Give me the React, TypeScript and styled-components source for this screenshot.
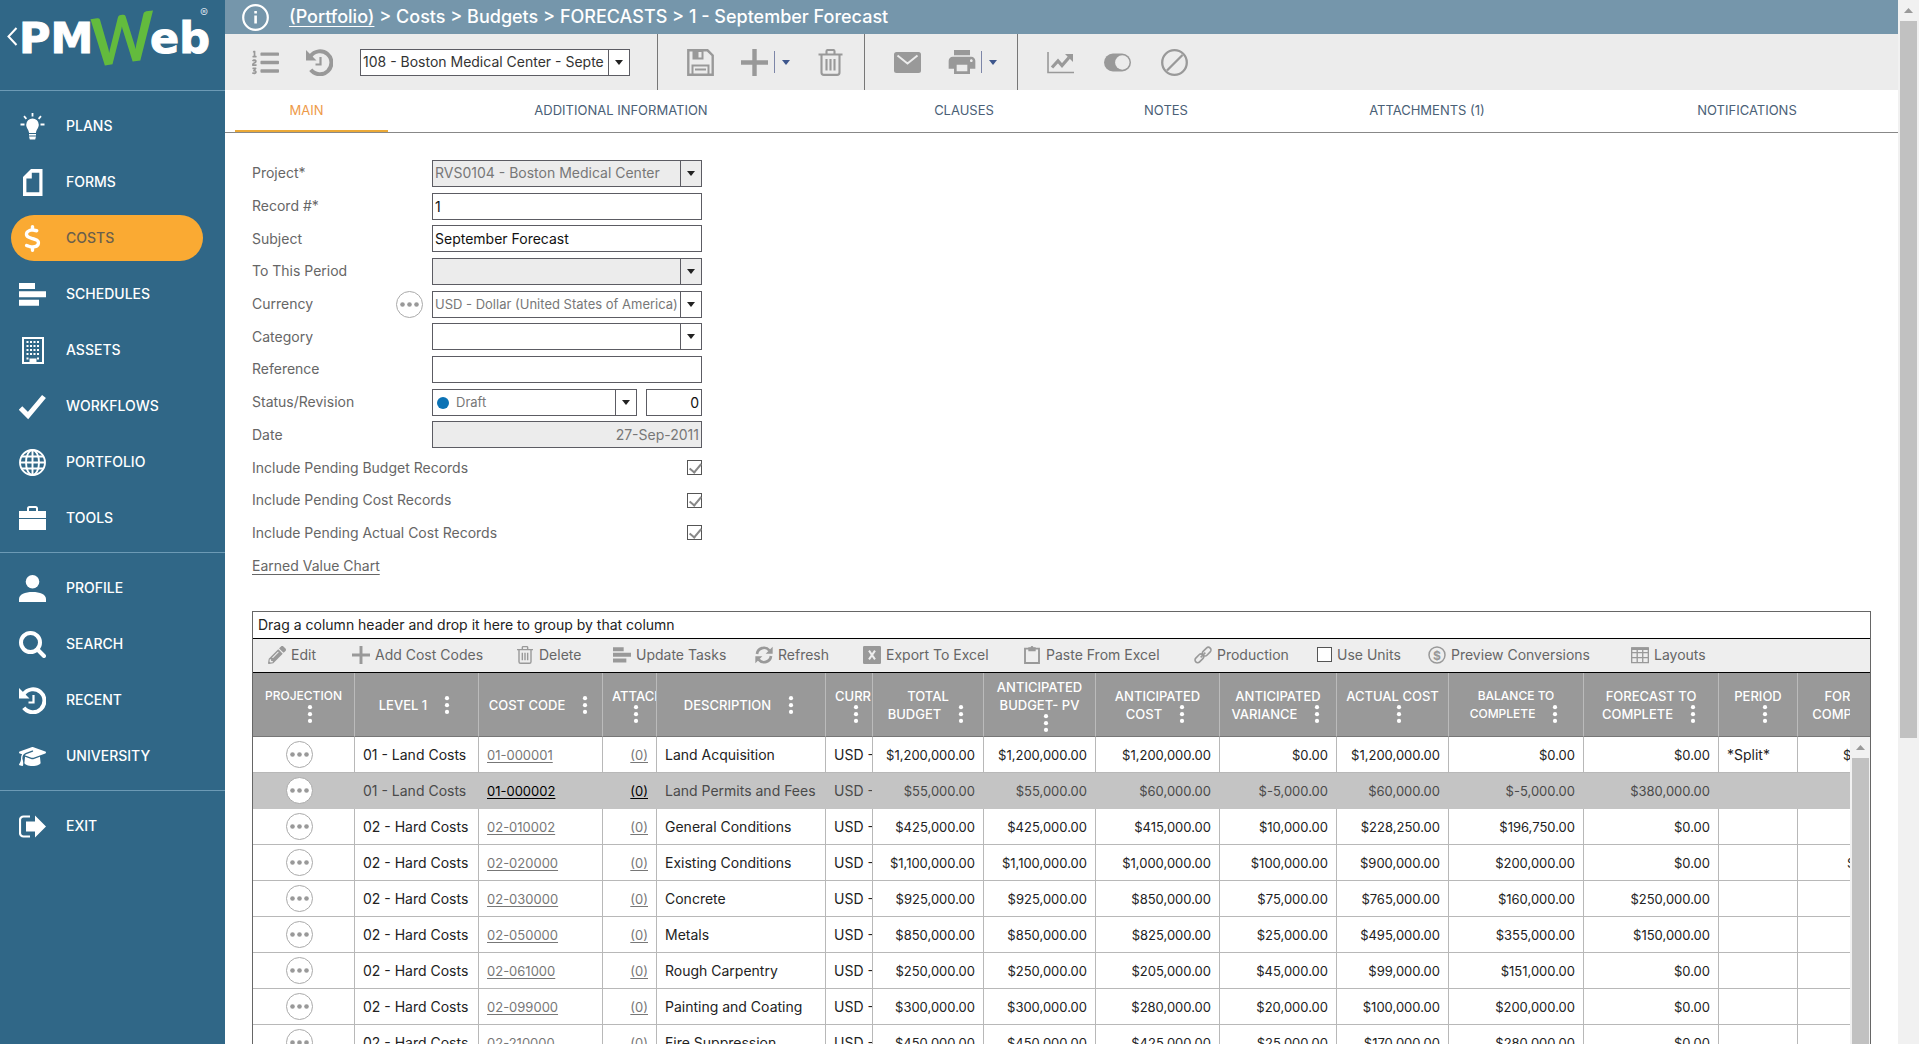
import React from "react";
import styled, { createGlobalStyle } from "styled-components";
import { FaDollarSign, FaGraduationCap } from "react-icons/fa6";
import { FaListOl, FaPencilAlt } from "react-icons/fa";
import { MdPrint } from "react-icons/md";

const GlobalStyle = createGlobalStyle`
  * { box-sizing: border-box; }
  body {
    margin: 0;
    background: #fff;
    overflow: hidden;
    font-family: Inter, "Open Sans", sans-serif;
    font-size: 14px;
    line-height: 18px;
    color: #222;
  }
  button, input, select { font: inherit; color: inherit; margin: 0; }
  button { border: 0; background: none; padding: 0; cursor: pointer; }
  svg { display: block; flex: none; }
`;

const Page = styled.div`
  display: grid;
  grid-template-columns: 225px minmax(0, 1fr) 21px;
  height: 100vh;
  overflow: hidden;
`;

/* ---------- side bar ---------- */

const Sidebar = styled.aside`
  background: #306787;
  color: #fff;
  overflow: hidden;
`;

const Brand = styled.a`
  display: block;
  height: 91px;
  border-bottom: 1px solid #6c9ab5;
  color: #fff;
`;

const NavGroup = styled.nav`
  display: flex;
  flex-direction: column;
  gap: 10px;
  padding: 12px 11px 11px;
  border-bottom: 1px solid #6c9ab5;
  &:last-child { border-bottom: 0; }
`;

const NavItem = styled.a<{ $active?: boolean }>`
  display: flex;
  align-items: center;
  gap: 20px;
  width: 192px;
  height: 46px;
  padding: 0 8px;
  border-radius: 23px;
  font-weight: 500;
  text-decoration: none;
  color: ${(p) => (p.$active ? "#6b5f4b" : "#fff")};
  background: ${(p) => (p.$active ? "#faaa33" : "transparent")};
  svg { color: #fff; }
`;

/* ---------- header, tool bar, tabs ---------- */

const Main = styled.main`
  display: flex;
  flex-direction: column;
  min-width: 0;
  overflow: hidden;
  & > * { flex: none; }
`;

const TitleBar = styled.header`
  display: flex;
  align-items: center;
  gap: 20px;
  height: 34px;
  padding-left: 17px;
  background: #7596ab;
  color: #fff;
  font-size: 18px;
  font-weight: 500;
  line-height: 24px;
  a { color: inherit; text-underline-offset: 3px; }
`;

const Toolbar = styled.div`
  display: flex;
  height: 56px;
  background: #ececec;
  color: #999;
`;

const ToolGroup = styled.div`
  display: flex;
  align-items: center;
  gap: 27px;
  padding: 0 20px 0 29px;
  border-right: 1px solid #777;
  &:first-child { padding: 0 27px; }
  &:last-child { border-right: 0; gap: 30px; }
`;

const IconButton = styled.button`
  display: flex;
  align-items: center;
  justify-content: center;
  width: 27px;
  height: 27px;
`;

const Split = styled.div`
  display: flex;
  align-items: center;
  gap: 6px;
`;

const SplitArrow = styled.button`
  display: flex;
  align-items: center;
  height: 22px;
  padding-left: 7px;
  border-left: 1px solid #7d86a8;
  color: #3d568c;
`;

const Tabs = styled.div`
  display: grid;
  grid-template-columns: 163fr 466fr 220fr 184fr 338fr 302fr;
  height: 43px;
  border-bottom: 1px solid #888;
`;

const Tab = styled.button<{ $active?: boolean }>`
  position: relative;
  padding-bottom: 2px;
  font-size: 13px;
  color: ${(p) => (p.$active ? "#ee9a48" : "#4a6076")};
  &::after {
    content: "";
    display: ${(p) => (p.$active ? "block" : "none")};
    position: absolute;
    left: 10px;
    right: 0;
    bottom: 0;
    height: 2px;
    background: #eba937;
  }
`;

/* ---------- form ---------- */

const Form = styled.form`
  display: grid;
  grid-template-columns: 144px 36px 270px;
  grid-auto-rows: 1fr;
  align-items: center;
  height: 425px;
  margin: 24px 0 29px;
  padding-left: 27px;
  color: #666;
`;

const Label = styled.label<{ $wide?: boolean }>`
  grid-column: 1 / span ${(p) => (p.$wide ? 2 : 1)};
  white-space: nowrap;
`;

const FieldCell = styled.div`
  grid-column: 3;
  display: flex;
  gap: 9px;
`;

const TextInput = styled.input<{ $right?: boolean; $muted?: boolean }>`
  flex: 1;
  width: 0;
  min-width: 0;
  height: 27px;
  padding: 0 2px;
  border: 1px solid #5c5c63;
  border-radius: 0;
  outline: 0;
  background: ${(p) => (p.$muted ? "#ececec" : "#fff")};
  color: ${(p) => (p.$muted ? "#777" : "#111")};
  text-align: ${(p) => (p.$right ? "right" : "left")};
`;

const SelectBox = styled.span<{ $width?: number; $muted?: boolean }>`
  position: relative;
  display: flex;
  width: ${(p) => p.$width ?? 270}px;
  height: 27px;
  border: 1px solid #5c5c63;
  background: ${(p) => (p.$muted ? "#ececec" : "#fff")};
  color: #333;
`;

const Select = styled.select<{ $small?: boolean; $inset?: number; $tone?: string }>`
  flex: 1;
  min-width: 0;
  padding: 0 0 0 ${(p) => p.$inset ?? 2}px;
  margin-right: 21px;
  border: 0;
  border-radius: 0;
  outline: 0;
  appearance: none;
  background: transparent;
  font-size: ${(p) => (p.$small ? 13 : 14)}px;
  color: ${(p) => p.$tone ?? "#777"};
`;

const SelectArrow = styled.span`
  position: absolute;
  top: 0;
  right: 0;
  bottom: 0;
  display: flex;
  align-items: center;
  justify-content: center;
  width: 21px;
  border-left: 1px solid #5c5c63;
  color: #222;
  pointer-events: none;
`;

const StatusDot = styled.span`
  position: absolute;
  top: 7px;
  left: 4px;
  width: 12px;
  height: 12px;
  border-radius: 50%;
  background: #0b72b5;
  pointer-events: none;
`;

const RoundButton = styled.button`
  display: flex;
  align-items: center;
  justify-content: center;
  width: 27px;
  height: 27px;
  border: 1px solid #aaa;
  border-radius: 50%;
  background: #fff;
  color: #999;
`;

const CheckBox = styled.input`
  appearance: none;
  position: relative;
  width: 15px;
  height: 15px;
  border: 1px solid #555;
  background: #fff;
  &:checked::after {
    content: "";
    position: absolute;
    top: 0;
    left: 4px;
    width: 5px;
    height: 10px;
    border: solid #888;
    border-width: 0 2px 2px 0;
    transform: rotate(40deg);
  }
`;

const CheckCell = styled.div`
  grid-column: 3;
  justify-self: end;
  display: flex;
`;

const ChartLink = styled.a`
  grid-column: 1 / -1;
  color: #666;
  text-underline-offset: 3px;
`;

/* ---------- grid ---------- */

const Grid = styled.section`
  margin: 0 27px;
  border: 1px solid #666;
`;

const GroupHint = styled.div`
  padding: 4px 5px;
  border-bottom: 1px solid #000;
`;

const GridTools = styled.div`
  display: grid;
  grid-template-columns: 84px 164px 97px 142px 108px 160px 171px 123px 111px 203px auto;
  align-items: center;
  height: 34px;
  padding: 0 0 2px 15px;
  border-bottom: 1px solid #000;
  background: #eee;
  color: #666;
`;

const ToolButton = styled.button`
  display: flex;
  align-items: center;
  gap: 5px;
  white-space: nowrap;
  svg { color: #999; }
`;

const ToolCheck = styled.label`
  display: flex;
  align-items: center;
  gap: 5px;
  white-space: nowrap;
`;

const GridBody = styled.div`
  display: grid;
  grid-template-columns: minmax(0, 1fr) 20px;
`;

const TableClip = styled.div`
  overflow: hidden;
`;

const Table = styled.table`
  table-layout: fixed;
  width: 1688px;
  border-spacing: 0;
`;

const Th = styled.th<{ $small?: boolean }>`
  height: 64px;
  padding: 0 9px;
  border-right: 1px solid #bbb;
  border-bottom: 1px solid #777;
  overflow: hidden;
  background: #999;
  color: #fff;
  font-size: ${(p) => (p.$small ? 12 : 13)}px;
  font-weight: 500;
  white-space: nowrap;
  text-align: center;
`;

const HeadLine = styled.div`
  display: flex;
  justify-content: safe center;
  align-items: center;
  height: 18px;
`;

const MenuDots = styled.button`
  margin-left: 13px;
  color: #fff;
`;

const Row = styled.tr<{ $selected?: boolean }>`
  height: 36px;
  background: ${(p) => (p.$selected ? "#c4c4c4" : "#fff")};
  color: ${(p) => (p.$selected ? "#4a4a4a" : "#222")};
  td { border-color: ${(p) => (p.$selected ? "#c4c4c4" : "#b8b8b8")}; }
  a { color: ${(p) => (p.$selected ? "#000" : "#777")}; }
`;

const Td = styled.td<{ $num?: boolean; $right?: boolean }>`
  height: 36px;
  padding: 0 8px;
  border-style: solid;
  border-width: 0 1px 1px 0;
  overflow: hidden;
  white-space: nowrap;
  font-size: ${(p) => (p.$num ? 13 : 14)}px;
  text-align: ${(p) => (p.$right ? "right" : "left")};
  a { text-underline-offset: 2px; }
`;

const ProjectionTd = styled(Td)`
  padding: 0 0 0 33px;
`;

const ScrollHead = styled.div`
  height: 64px;
  background: #999;
  border-bottom: 1px solid #777;
`;

const ScrollTrack = styled.div`
  display: flex;
  flex-direction: column;
  align-items: center;
  height: 100%;
  background: #f1f1f1;
  color: #999;
`;

const ScrollUp = styled.button`
  display: flex;
  align-items: center;
  justify-content: center;
  flex: none;
  width: 17px;
  height: 21px;
`;

const ScrollThumb = styled.div<{ $length: string }>`
  width: 17px;
  height: ${(p) => p.$length};
  background: #c1c1c1;
`;

/* ---------- icons ---------- */

type IconProps = { size?: number; children: React.ReactNode };

/* Every drawn icon shares a 27 unit box. */
const Icon = ({ size = 27, children }: IconProps) => (
  <svg width={size} height={size} viewBox="0 0 27 27" fill="currentColor" aria-hidden="true">
    {children}
  </svg>
);

const line = (w: number) => ({ fill: "none", stroke: "currentColor", strokeWidth: w });

const Caret = () => (
  <svg width="8" height="5" viewBox="0 0 8 5" fill="currentColor" aria-hidden="true">
    <path d="M0 0H8L4 5Z" />
  </svg>
);

const UpArrow = () => (
  <svg width="9" height="5" viewBox="0 0 9 5" fill="currentColor" aria-hidden="true">
    <path d="M0 5H9L4.5 0Z" />
  </svg>
);

const Ellipsis = () => (
  <svg width="19" height="5" viewBox="0 0 19 5" fill="currentColor" aria-hidden="true">
    <circle cx="2.5" cy="2.5" r="2.3" />
    <circle cx="9.5" cy="2.5" r="2.3" />
    <circle cx="16.5" cy="2.5" r="2.3" />
  </svg>
);

const Dots = () => (
  <svg width="14" height="18" viewBox="0 0 14 18" fill="currentColor" aria-hidden="true">
    <circle cx="7" cy="2.2" r="2.1" />
    <circle cx="7" cy="9.2" r="2.1" />
    <circle cx="7" cy="15.9" r="2.1" />
  </svg>
);

const BulbIcon = () => (
  <Icon>
    <path d="M13.5 5.5a6.3 6.3 0 0 1 6.3 6.3c0 3.2-2.4 4.4-2.9 8.2h-6.8c-.5-3.8-2.9-5-2.9-8.2a6.3 6.3 0 0 1 6.3-6.3zM10 21h7v1.6h-7zM10 23.4h7l-.8 3h-5.4z" />
    <path d="M13.5 0v3.5M5 3.2l2.4 2.6M22 3.2l-2.4 2.6M1.5 11.5h4M21.5 11.5h4" {...line(1.8)} />
  </Icon>
);

const FormIcon = () => (
  <Icon>
    <path fillRule="evenodd" d="M12 0H23.500V27H4V8zM12.800 3.800V9.500H7.400V23.200H20.300V3.800z" />
  </Icon>
);

const BarsIcon = ({ size }: { size?: number }) => (
  <Icon size={size}>
    <path d="M0 2h16v6H0zM0 10.300h27v6H0zM0 18.700h20v6H0z" />
  </Icon>
);

const BuildingIcon = () => (
  <Icon>
    <path d="M4 1h20v25H4z" {...line(2)} />
    {[5, 9, 13, 17].map((y) => (
      <path key={y} d={`M7.5 ${y}h2M11 ${y}h2M14.5 ${y}h2M18 ${y}h2`} {...line(2)} />
    ))}
    <path d="M7.500 20.500h2v2h-2zM18 20.500h2v2h-2zM10.500 21.500h7v5h-7z" />
  </Icon>
);

const CheckIcon = () => (
  <Icon>
    <path d="M1.500 15l7.500 7.500L25 3.500" {...line(5)} />
  </Icon>
);

const GlobeIcon = () => (
  <Icon>
    <g {...line(1.9)}>
      <circle cx="13.5" cy="13.5" r="12.5" />
      <ellipse cx="13.5" cy="13.5" rx="6.5" ry="12.5" />
      <path d="M13.5 1v25M1 13.5h25M3 7.5h21M3 19.5h21" />
    </g>
  </Icon>
);

const CaseIcon = () => (
  <Icon>
    <path d="M9 6V3.500a1.500 1.500 0 0 1 1.500-1.500h6a1.500 1.500 0 0 1 1.500 1.500V6" {...line(2)} />
    <path d="M0 6h27v7H0zM0 14h27v11H0z" />
  </Icon>
);

const PersonIcon = () => (
  <Icon>
    <circle cx="13.5" cy="6.8" r="6.8" />
    <path d="M0 27v-3c0-4.500 6-7 13.500-7S27 19.500 27 24v3z" />
  </Icon>
);

const SearchIcon = () => (
  <Icon>
    <circle cx="11.5" cy="11.5" r="9.5" {...line(4)} />
    <path d="M18.500 18.500l6.500 6.500" {...line(4)} strokeLinecap="round" />
  </Icon>
);

const HistoryIcon = () => (
  <Icon>
    <path d="M4.500 7.200A11.500 11.500 0 1 1 4.800 20.800" {...line(4)} />
    <path d="M0 1v10.500h10.500z" />
    <path d="M14.500 8v7.500H9.500" {...line(2.2)} />
  </Icon>
);

const ExitIcon = () => (
  <Icon>
    <path d="M11 3.500H4.500A3.500 3.500 0 0 0 1 7v13a3.500 3.500 0 0 0 3.500 3.500H11" {...line(2.2)} />
    <path d="M7 8.500h9V2.500L27 13.500 16 24.500V18.500H7z" />
  </Icon>
);

const SaveIcon = () => (
  <Icon>
    <path d="M1.300 1.300H20.500L25.700 6.500V25.700H1.300z" {...line(2.4)} />
    <path d="M5.500 1.500h11v9h-11z" />
    <path d="M11.500 3h3v5.500h-3z" fill="#ececec" />
    <path d="M5.500 25.500V16.500H21.500V25.500M8 20.500H19" {...line(2)} />
  </Icon>
);

const PlusIcon = ({ size }: { size?: number }) => (
  <Icon size={size}>
    <path d="M11.300 0h4.400v11.300H27v4.400H15.700V27h-4.400V15.700H0v-4.400h11.300z" />
  </Icon>
);

const TrashIcon = ({ size }: { size?: number }) => (
  <Icon size={size}>
    <path
      d="M1.500 5.500h24M9.500 5V2.300a1.300 1.300 0 0 1 1.300-1.300h5.400a1.300 1.300 0 0 1 1.300 1.300V5M4.500 5.500v18a2.400 2.400 0 0 0 2.400 2.400h13.200a2.400 2.400 0 0 0 2.400-2.400v-18M9.500 10v11.500M13.500 10v11.500M17.500 10v11.500"
      {...line(2.1)}
    />
  </Icon>
);

const MailIcon = () => (
  <Icon>
    <rect x="0" y="3" width="27" height="21" rx="2.5" />
    <path d="M3.500 6.500l10 8 10-8" fill="none" stroke="#ececec" strokeWidth="2" />
  </Icon>
);

const ChartIcon = () => (
  <Icon>
    <path d="M1 3v20.500h26" {...line(1.6)} />
    <path d="M5 18.500l6-6.500 4 4.500 7-8" {...line(3.2)} />
    <path d="M18 5h8v8z" />
  </Icon>
);

const ToggleIcon = () => (
  <Icon>
    <rect x="0" y="4.5" width="27" height="18" rx="9" />
    <circle cx="18.3" cy="13.5" r="7.2" fill="#ececec" />
  </Icon>
);

const BanIcon = () => (
  <Icon>
    <circle cx="13.5" cy="13.5" r="12.3" {...line(2.3)} />
    <path d="M6 21.500L21.500 6" {...line(2.3)} />
  </Icon>
);

const RefreshIcon = () => (
  <Icon size={18}>
    <path d="M3 12A10.500 10.500 0 0 1 21.500 6.500M24 15A10.500 10.500 0 0 1 5.500 20.500" {...line(4)} />
    <path d="M26.500 1v10.500H16zM.5 26V15.500H11z" />
  </Icon>
);

const ExcelIcon = () => (
  <Icon size={18}>
    <rect width="27" height="27" rx="2" />
    <path d="M9 7l9 13M18 7L9 20" fill="none" stroke="#eee" strokeWidth="3" />
  </Icon>
);

const PasteIcon = () => (
  <Icon size={18}>
    <path d="M3 4h21v21.500H3z" {...line(2.8)} />
    <path d="M8 2h3.500a2 2 0 0 1 4 0H19v6H8z" />
  </Icon>
);

const LinkIcon = () => (
  <Icon size={18}>
    <g {...line(2.4)}>
      <rect x="11.5" y="4.5" width="15" height="8" rx="4" transform="rotate(-45 19 8.5)" />
      <rect x="0.5" y="14.5" width="15" height="8" rx="4" transform="rotate(-45 8 18.5)" />
      <path d="M10 17l7-7" />
    </g>
  </Icon>
);

const CoinIcon = () => (
  <svg width="18" height="18" viewBox="0 0 18 18" aria-hidden="true">
    <circle cx="9" cy="9" r="8" {...line(1.5)} />
    <text x="9" y="13.5" textAnchor="middle" fontSize="12" fontWeight="700" fill="currentColor">$</text>
  </svg>
);

const LayoutIcon = () => (
  <Icon size={18}>
    <path d="M1 3h25v22H1zM1 10h25M1 17.500h25M9.300 3v22M17.600 3v22" {...line(2)} />
    <path d="M1 2h25v4H1z" />
  </Icon>
);

const InfoIcon = () => (
  <Icon>
    <circle cx="13.5" cy="13.5" r="12.3" {...line(2.2)} />
    <path d="M12.300 11.500h2.600v8h-2.600zM12.300 7h2.600v2.600h-2.600z" />
  </Icon>
);

const Logo = () => (
  <svg width="225" height="90" viewBox="0 0 225 90" role="img" aria-label="PMWeb">
    <path d="M16.500 28L8.500 36.500l8 8.500" fill="none" stroke="#fff" strokeWidth="2" />
    <g fill="#fff" stroke="#fff" strokeWidth="1" fontFamily="DejaVu Sans" fontWeight="700" fontSize="43">
      <text x="19" y="53">PM</text>
      <text x="150" y="53">eb</text>
    </g>
    <text x="90" y="63" fill="#63bb3d" fontFamily="Lato" fontWeight="700" fontStyle="italic" fontSize="66" transform="rotate(-8 120 40)">W</text>
    <text x="200" y="17" fill="#cfdde6" fontSize="12">®</text>
  </svg>
);

/* ---------- data ---------- */

type Nav = { label: string; icon: React.ReactNode; active?: boolean };

const navGroups: Nav[][] = [
  [
    { label: "PLANS", icon: <BulbIcon /> },
    { label: "FORMS", icon: <FormIcon /> },
    { label: "COSTS", icon: <FaDollarSign size={27} />, active: true },
    { label: "SCHEDULES", icon: <BarsIcon /> },
    { label: "ASSETS", icon: <BuildingIcon /> },
    { label: "WORKFLOWS", icon: <CheckIcon /> },
    { label: "PORTFOLIO", icon: <GlobeIcon /> },
    { label: "TOOLS", icon: <CaseIcon /> },
  ],
  [
    { label: "PROFILE", icon: <PersonIcon /> },
    { label: "SEARCH", icon: <SearchIcon /> },
    { label: "RECENT", icon: <HistoryIcon /> },
    { label: "UNIVERSITY", icon: <FaGraduationCap size={27} /> },
  ],
  [{ label: "EXIT", icon: <ExitIcon /> }],
];

const tabs = ["MAIN", "ADDITIONAL INFORMATION", "CLAUSES", "NOTES", "ATTACHMENTS (1)", "NOTIFICATIONS"];

type Column = { width: number; lines: string[]; below?: boolean; small?: boolean };

const columns: Column[] = [
  { width: 102, lines: ["PROJECTION"], below: true, small: true },
  { width: 124, lines: ["LEVEL 1"] },
  { width: 124, lines: ["COST CODE"] },
  { width: 54, lines: ["ATTACH"], below: true },
  { width: 169, lines: ["DESCRIPTION"] },
  { width: 47, lines: ["CURR"], below: true },
  { width: 111, lines: ["TOTAL", "BUDGET"] },
  { width: 112, lines: ["ANTICIPATED", "BUDGET- PV"], below: true },
  { width: 124, lines: ["ANTICIPATED", "COST"] },
  { width: 117, lines: ["ANTICIPATED", "VARIANCE"] },
  { width: 112, lines: ["ACTUAL COST"], below: true },
  { width: 135, lines: ["BALANCE TO", "COMPLETE"], small: true },
  { width: 135, lines: ["FORECAST TO", "COMPLETE"] },
  { width: 79, lines: ["PERIOD"], below: true },
  { width: 143, lines: ["FORECAST AT", "COMPLETION"] },
];

type Line = {
  level: string;
  code: string;
  name: string;
  amounts: string[];
  period?: string;
  total?: string;
  selected?: boolean;
};

const land = "01 - Land Costs";
const hard = "02 - Hard Costs";

const lines: Line[] = [
  { level: land, code: "01-000001", name: "Land Acquisition", amounts: ["$1,200,000.00", "$1,200,000.00", "$1,200,000.00", "$0.00", "$1,200,000.00", "$0.00", "$0.00"], period: "*Split*", total: "$1,200,000.00" },
  { level: land, code: "01-000002", name: "Land Permits and Fees", amounts: ["$55,000.00", "$55,000.00", "$60,000.00", "$-5,000.00", "$60,000.00", "$-5,000.00", "$380,000.00"], selected: true },
  { level: hard, code: "02-010002", name: "General Conditions", amounts: ["$425,000.00", "$425,000.00", "$415,000.00", "$10,000.00", "$228,250.00", "$196,750.00", "$0.00"] },
  { level: hard, code: "02-020000", name: "Existing Conditions", amounts: ["$1,100,000.00", "$1,100,000.00", "$1,000,000.00", "$100,000.00", "$900,000.00", "$200,000.00", "$0.00"], total: "$1,100,000.00" },
  { level: hard, code: "02-030000", name: "Concrete", amounts: ["$925,000.00", "$925,000.00", "$850,000.00", "$75,000.00", "$765,000.00", "$160,000.00", "$250,000.00"] },
  { level: hard, code: "02-050000", name: "Metals", amounts: ["$850,000.00", "$850,000.00", "$825,000.00", "$25,000.00", "$495,000.00", "$355,000.00", "$150,000.00"] },
  { level: hard, code: "02-061000", name: "Rough Carpentry", amounts: ["$250,000.00", "$250,000.00", "$205,000.00", "$45,000.00", "$99,000.00", "$151,000.00", "$0.00"] },
  { level: hard, code: "02-099000", name: "Painting and Coating", amounts: ["$300,000.00", "$300,000.00", "$280,000.00", "$20,000.00", "$100,000.00", "$200,000.00", "$0.00"] },
  { level: hard, code: "02-210000", name: "Fire Suppression", amounts: ["$450,000.00", "$450,000.00", "$425,000.00", "$25,000.00", "$170,000.00", "$280,000.00", "$0.00"] },
];

/* ---------- parts ---------- */

type DropProps = {
  id: string;
  value: string;
  label?: string;
  width?: number;
  muted?: boolean;
  small?: boolean;
  inset?: number;
  tone?: string;
  children?: React.ReactNode;
};

const DropDown = ({ id, value, label, width, muted, small, inset, tone, children }: DropProps) => (
  <SelectBox $width={width} $muted={muted}>
    {children}
    <Select id={id} aria-label={label} $small={small} $inset={inset} $tone={tone}>
      <option>{value}</option>
    </Select>
    <SelectArrow><Caret /></SelectArrow>
  </SelectBox>
);

const HeaderCell = ({ column }: { column: Column }) => {
  const dots = <MenuDots aria-label={`${column.lines.join(" ")} menu`}><Dots /></MenuDots>;
  const last = column.lines.length - 1;
  return (
    <Th $small={column.small}>
      {column.lines.map((text, i) => (
        <HeadLine key={text}>
          {text}
          {i === last && !column.below && dots}
        </HeadLine>
      ))}
      {column.below && <HeadLine>{dots}</HeadLine>}
    </Th>
  );
};

const checks = ["Include Pending Budget Records", "Include Pending Cost Records", "Include Pending Actual Cost Records"];

export default function App() {
  return (
    <>
      <GlobalStyle />
      <Page>
        <Sidebar>
          <Brand href="#"><Logo /></Brand>
          {navGroups.map((group) => (
            <NavGroup key={group[0].label}>
              {group.map((item) => (
                <NavItem key={item.label} href="#" $active={item.active}>
                  {item.icon}
                  {item.label}
                </NavItem>
              ))}
            </NavGroup>
          ))}
        </Sidebar>

        <Main>
          <TitleBar>
            <InfoIcon />
            <span>
              <a href="#">(Portfolio)</a> &gt; Costs &gt; Budgets &gt; FORECASTS &gt; 1 - September Forecast
            </span>
          </TitleBar>

          <Toolbar>
            <ToolGroup>
              <IconButton aria-label="List"><FaListOl size={27} /></IconButton>
              <IconButton aria-label="History"><HistoryIcon /></IconButton>
              <DropDown id="record" label="Record" value="108 - Boston Medical Center - Septe" tone="#333" />
            </ToolGroup>
            <ToolGroup>
              <IconButton aria-label="Save"><SaveIcon /></IconButton>
              <Split>
                <IconButton aria-label="Add"><PlusIcon /></IconButton>
                <SplitArrow aria-label="Add options"><Caret /></SplitArrow>
              </Split>
              <IconButton aria-label="Delete"><TrashIcon /></IconButton>
            </ToolGroup>
            <ToolGroup>
              <IconButton aria-label="Email"><MailIcon /></IconButton>
              <Split>
                <IconButton aria-label="Print"><MdPrint size={32} /></IconButton>
                <SplitArrow aria-label="Print options"><Caret /></SplitArrow>
              </Split>
            </ToolGroup>
            <ToolGroup>
              <IconButton aria-label="Chart"><ChartIcon /></IconButton>
              <IconButton aria-label="Toggle"><ToggleIcon /></IconButton>
              <IconButton aria-label="Cancel"><BanIcon /></IconButton>
            </ToolGroup>
          </Toolbar>

          <Tabs role="tablist">
            {tabs.map((tab, i) => (
              <Tab key={tab} role="tab" aria-selected={i === 0} $active={i === 0}>{tab}</Tab>
            ))}
          </Tabs>

          <Form>
            <Label htmlFor="project">Project*</Label>
            <FieldCell><DropDown id="project" value="RVS0104 - Boston Medical Center" muted /></FieldCell>
            <Label htmlFor="number">Record #*</Label>
            <FieldCell><TextInput id="number" defaultValue="1" /></FieldCell>
            <Label htmlFor="subject">Subject</Label>
            <FieldCell><TextInput id="subject" defaultValue="September Forecast" /></FieldCell>
            <Label htmlFor="period">To This Period</Label>
            <FieldCell><DropDown id="period" value="" muted /></FieldCell>
            <Label htmlFor="currency">Currency</Label>
            <RoundButton type="button" aria-label="Currency details"><Ellipsis /></RoundButton>
            <FieldCell><DropDown id="currency" value="USD - Dollar (United States of America)" small /></FieldCell>
            <Label htmlFor="category">Category</Label>
            <FieldCell><DropDown id="category" value="" /></FieldCell>
            <Label htmlFor="reference">Reference</Label>
            <FieldCell><TextInput id="reference" /></FieldCell>
            <Label htmlFor="status">Status/Revision</Label>
            <FieldCell>
              <DropDown id="status" value="Draft" width={205} small inset={23}><StatusDot /></DropDown>
              <TextInput aria-label="Revision" defaultValue="0" $right />
            </FieldCell>
            <Label htmlFor="date">Date</Label>
            <FieldCell><TextInput id="date" defaultValue="27-Sep-2011" readOnly $right $muted /></FieldCell>
            {checks.map((text, i) => (
              <React.Fragment key={text}>
                <Label htmlFor={`check${i}`} $wide>{text}</Label>
                <CheckCell><CheckBox id={`check${i}`} type="checkbox" defaultChecked /></CheckCell>
              </React.Fragment>
            ))}
            <ChartLink href="#">Earned Value Chart</ChartLink>
          </Form>

          <Grid>
            <GroupHint>Drag a column header and drop it here to group by that column</GroupHint>
            <GridTools>
              <ToolButton><FaPencilAlt size={18} />Edit</ToolButton>
              <ToolButton><PlusIcon size={18} />Add Cost Codes</ToolButton>
              <ToolButton><TrashIcon size={18} />Delete</ToolButton>
              <ToolButton><BarsIcon size={18} />Update Tasks</ToolButton>
              <ToolButton><RefreshIcon />Refresh</ToolButton>
              <ToolButton><ExcelIcon />Export To Excel</ToolButton>
              <ToolButton><PasteIcon />Paste From Excel</ToolButton>
              <ToolButton><LinkIcon />Production</ToolButton>
              <ToolCheck><CheckBox type="checkbox" />Use Units</ToolCheck>
              <ToolButton><CoinIcon />Preview Conversions</ToolButton>
              <ToolButton><LayoutIcon />Layouts</ToolButton>
            </GridTools>
            <GridBody>
              <TableClip>
                <Table>
                  <colgroup>
                    {columns.map((c) => <col key={c.lines.join()} width={c.width} />)}
                  </colgroup>
                  <thead>
                    <tr>
                      {columns.map((c) => <HeaderCell key={c.lines.join()} column={c} />)}
                    </tr>
                  </thead>
                  <tbody>
                    {lines.map((row) => (
                      <Row key={row.code} $selected={row.selected}>
                        <ProjectionTd>
                          <RoundButton aria-label={`Projection for ${row.code}`}><Ellipsis /></RoundButton>
                        </ProjectionTd>
                        <Td>{row.level}</Td>
                        <Td $num><a href="#">{row.code}</a></Td>
                        <Td $num $right><a href="#">(0)</a></Td>
                        <Td>{row.name}</Td>
                        <Td>USD -</Td>
                        {row.amounts.map((amount, i) => <Td key={i} $num $right>{amount}</Td>)}
                        <Td>{row.period}</Td>
                        <Td $num $right>{row.total}</Td>
                      </Row>
                    ))}
                  </tbody>
                </Table>
              </TableClip>
              <div>
                <ScrollHead />
                <ScrollTrack>
                  <ScrollUp aria-label="Scroll up"><UpArrow /></ScrollUp>
                  <ScrollThumb $length="100%" />
                </ScrollTrack>
              </div>
            </GridBody>
          </Grid>
        </Main>

        <ScrollTrack>
          <ScrollUp aria-label="Scroll page up"><UpArrow /></ScrollUp>
          <ScrollThumb $length="calc(70% - 14px)" />
        </ScrollTrack>
      </Page>
    </>
  );
}
